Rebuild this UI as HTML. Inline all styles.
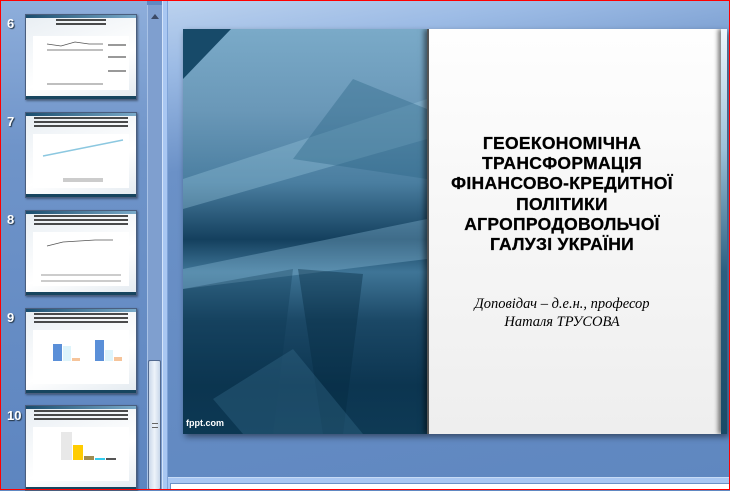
<!DOCTYPE html>
<html><head><meta charset="utf-8"><style>
*{margin:0;padding:0;box-sizing:border-box}
body{width:730px;height:490px;overflow:hidden;position:relative;background:#6189c2;font-family:"Liberation Sans",sans-serif}
.frame{position:absolute;inset:0;border:1px solid #f00;z-index:50;pointer-events:none}
.left{position:absolute;left:0;top:0;width:147px;height:490px;background:linear-gradient(180deg,#8eaedb 0%,#6f94c9 30%,#5d85c0 100%)}
.sb{position:absolute;left:147px;top:5px;width:15px;height:485px;background:#7f9fcf;border-left:1px solid #a8c2e6}
.thumbsb{position:absolute;left:148px;top:360px;width:13px;height:130px;background:linear-gradient(90deg,#c9d7ea,#eef3fa,#c9d7ea);border:1px solid #52698f;border-radius:2px}
.div{position:absolute;left:162px;top:0;width:6px;height:490px;background:#a9c7f2;border-left:1px solid #d4e4fa;border-right:1px solid #80a4d8}
.main{position:absolute;left:168px;top:0;width:562px;height:478px;background:linear-gradient(170deg,#bcd2ee 0%,#9cbbe5 12%,#6b91c7 30%,#5f87c0 100%)}
.bot{position:absolute;left:168px;top:477px;width:562px;height:13px;background:#a9c7f2;border-top:1px solid #c7dbf6}
.bot div{position:absolute;left:2px;top:5px;right:0;bottom:0;background:#fff;border:1px solid #6b91c7}
.num{position:absolute;left:7px;color:#fff;font-weight:bold;font-size:13px;text-shadow:1px 1px 1px #234}
.th{position:absolute;left:25px;width:112px;height:86px;background:linear-gradient(160deg,#e8eef3,#ffffff 60%,#e3eaf0);border:1px solid #4a5e7e;box-shadow:1px 1px 2px rgba(0,0,0,.4);overflow:hidden}
.th .tb{position:absolute;left:0;right:0;top:0;height:3px;background:linear-gradient(90deg,#1a4d6e,#7aaac9)}
.th .bb{position:absolute;left:0;right:0;bottom:0;height:3px;background:#17455f}
.th .t{position:absolute;left:8px;right:8px;top:4px;height:12px;background:repeating-linear-gradient(180deg,#111 0 2px,transparent 2px 4px);opacity:.75}
.th .c{position:absolute;left:7px;right:7px;top:21px;bottom:9px;background:#fff}
.slide{position:absolute;left:183px;top:29px;width:544px;height:405px;box-shadow:2px 3px 6px rgba(0,0,0,.45);overflow:hidden;background:#1d4f6e}
.dark{position:absolute;left:0;top:0;width:244px;height:405px;background:linear-gradient(180deg,#7aaac8 0%,#6a98b8 20%,#4a7ea0 38%,#14405e 52%,#3f7597 60%,#1b4866 72%,#0c3550 88%,#0e3a55 100%)}
.white{position:absolute;left:244px;top:0;width:294px;height:405px;background:linear-gradient(180deg,#fefefe,#eeeeee);border-left:2px solid #555;box-shadow:-3px 0 5px rgba(0,0,0,.5)}
.rs{position:absolute;left:538px;top:0;width:6px;height:405px;background:linear-gradient(180deg,#f0f6fc,#9cc0d8 30%,#2b5f80 60%,#1a4a66);box-shadow:-3px 0 4px rgba(0,0,0,.5)}
h1{position:absolute;left:-26px;right:0;top:104px;text-align:center;font-size:17.5px;line-height:20.2px;font-weight:bold;color:#000;letter-spacing:.3px;-webkit-text-stroke:.3px #000}
.sub{position:absolute;left:-26px;right:0;top:266px;text-align:center;font-family:"Liberation Serif",serif;font-style:italic;font-size:14.5px;line-height:18px}
.fp{position:absolute;left:3px;bottom:6px;color:#fff;font-size:9px;font-weight:bold}
</style></head><body>
<div class="frame"></div>
<div class="left">
<div class="num" style="top:16px">6</div>
<div class="th" style="top:14px"><div class="tb"></div><div class="t" style="left:30px;right:30px;height:8px"></div><div class="c"><svg width="98" height="56"><g stroke="#555" fill="none" stroke-width=".8"><polyline points="14,8 28,10 42,6 56,8 70,8"/><polyline points="14,14 28,14 42,14 56,14 70,14"/><polyline points="14,48 28,48 42,48 56,48 70,48"/></g><g fill="#999"><rect x="75" y="8" width="18" height="2"/><rect x="75" y="20" width="18" height="2"/><rect x="75" y="34" width="18" height="2"/></g></svg></div><div class="bb"></div></div>
<div class="num" style="top:114px">7</div>
<div class="th" style="top:112px"><div class="tb"></div><div class="t"></div><div class="c"><svg width="98" height="56"><polyline points="10,22 90,6" stroke="#8cc8e0" stroke-width="1.5" fill="none"/><rect x="30" y="44" width="40" height="4" fill="#ccc"/></svg></div><div class="bb"></div></div>
<div class="num" style="top:212px">8</div>
<div class="th" style="top:210px"><div class="tb"></div><div class="t"></div><div class="c"><svg width="98" height="56"><polyline points="14,14 30,10 46,9 62,8 80,8" stroke="#555" stroke-width=".8" fill="none"/><rect x="8" y="42" width="80" height="2" fill="#ccc"/><rect x="8" y="48" width="80" height="2" fill="#ccc"/></svg></div><div class="bb"></div></div>
<div class="num" style="top:310px">9</div>
<div class="th" style="top:308px"><div class="tb"></div><div class="t"></div><div class="c"><svg width="98" height="56"><rect x="20" y="14" width="9" height="17" fill="#5a8fd8"/><rect x="30" y="16" width="8" height="15" fill="#def4fb"/><rect x="39" y="28" width="8" height="3" fill="#f6c49a"/><rect x="62" y="10" width="9" height="21" fill="#5a8fd8"/><rect x="72" y="20" width="8" height="11" fill="#def4fb"/><rect x="81" y="27" width="8" height="4" fill="#f6c49a"/></svg></div><div class="bb"></div></div>
<div class="num" style="top:408px">10</div>
<div class="th" style="top:405px"><div class="tb"></div><div class="t"></div><div class="c"><svg width="98" height="56"><rect x="28" y="5" width="11" height="28" fill="#e8e8e8"/><rect x="40" y="18" width="10" height="15" fill="#ffcc00"/><rect x="51" y="29" width="10" height="4" fill="#a08c50"/><rect x="62" y="31" width="10" height="2" fill="#33ccee"/><rect x="73" y="31" width="10" height="2" fill="#555"/></svg></div><div class="bb"></div></div>
</div>
<div class="sb"><div style="position:absolute;left:3px;top:9px;width:0;height:0;border-left:4px solid transparent;border-right:4px solid transparent;border-bottom:5px solid #3c4a66"></div></div>
<div class="thumbsb"><div style="position:absolute;left:3px;top:62px;width:6px;height:5px;border-top:1px solid #666;border-bottom:1px solid #666"></div></div>
<div class="div"></div>
<div class="main"></div>
<div class="bot"><div></div></div>
<div class="slide">
<div class="dark">
<svg width="244" height="405" style="position:absolute;left:0;top:0">
<polygon points="0,0 48,0 0,50" fill="#174a69"/>
<polygon points="0,150 244,70 244,110 0,180" fill="#9cc8e0" opacity=".35"/>
<polygon points="170,50 244,80 244,150 110,130" fill="#2c6687" opacity=".4"/>
<polygon points="0,240 244,190 244,230 0,260" fill="#8ec0dc" opacity=".35"/>
<polygon points="115,240 180,245 160,405 140,405" fill="#052a40" opacity=".4"/>
<polygon points="0,260 110,240 90,405 0,405" fill="#0a3450" opacity=".3"/>
<polygon points="30,370 110,320 180,405 60,405" fill="#3a7090" opacity=".35"/>
</svg>
<div class="fp">fppt.com</div>
</div>
<div class="white">
<h1>ГЕОЕКОНОМІЧНА<br>ТРАНСФОРМАЦІЯ<br>ФІНАНСОВО-КРЕДИТНОЇ<br>ПОЛІТИКИ<br>АГРОПРОДОВОЛЬЧОЇ<br>ГАЛУЗІ УКРАЇНИ</h1>
<div class="sub">Доповідач – д.е.н., професор<br>Наталя ТРУСОВА</div>
</div>
<div class="rs"></div>
</div>
</body></html>
